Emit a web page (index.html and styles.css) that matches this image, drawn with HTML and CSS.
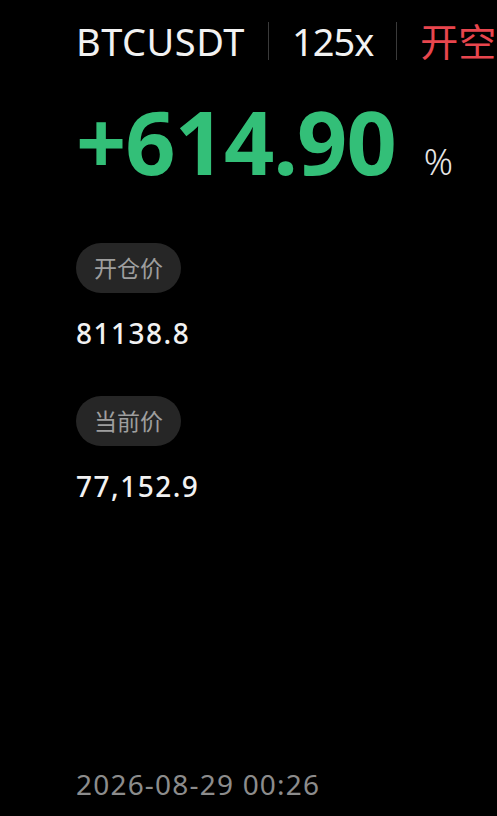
FILE: index.html
```html
<!DOCTYPE html>
<html lang="zh-CN">
<head>
    <meta charset="UTF-8">
    <meta name="viewport" content="width=device-width, initial-scale=1.0">
    <title>BTCUSDT</title>
    <link rel="stylesheet" href="styles.css">
</head>
<body>
    <div class="card">
        <div class="header">
            <span class="symbol">BTCUSDT</span>
            <span class="divider"></span>
            <span class="leverage">125x</span>
            <span class="divider"></span>
            <span class="side">开空</span>
        </div>

        <div class="pnl">
            <span class="pnlValue">+614.90</span>
            <span class="pnlUnit">%</span>
        </div>

        <div class="field">
            <div class="label">开仓价</div>
            <div class="price">81138.8</div>
        </div>

        <div class="field">
            <div class="label">当前价</div>
            <div class="price">77,152.9</div>
        </div>

        <div class="time">2026-08-29 00:26</div>
    </div>
</body>
</html>
```

FILE: styles.css
```css
body {
    margin: 0;
    background-color: #000;
    font-family: "Noto Sans", "Noto Sans CJK SC", sans-serif;
    overflow: hidden;
}

.card {
    height: 816px;
    box-sizing: border-box;
    padding: 17px 0 14px 76px;
    display: flex;
    flex-direction: column;
    align-items: flex-start;
    color: #f2f2f2;
}

.header {
    display: flex;
    align-items: center;
    white-space: nowrap;
    font-size: 38px;
    line-height: 48px;
}

.divider {
    width: 1px;
    height: 38px;
    background-color: #3a3a3a;
    margin: 0 23px;
}

.symbol {
    letter-spacing: 0.5px;
}

.leverage {
    letter-spacing: -1px;
}

.side {
    color: #e8464e;
}

.pnl {
    display: flex;
    align-items: baseline;
    margin-top: 26px;
}

.pnlValue {
    font-size: 88px;
    font-weight: bold;
    line-height: 100px;
    color: #33bf78;
    letter-spacing: -1px;
}

.pnlUnit {
    font-size: 36px;
    font-weight: 300;
    margin-left: 28px;
    color: #e6e6e6;
}

.field {
    display: flex;
    flex-direction: column;
    align-items: flex-start;
    margin-top: 52px;
}

.field + .field {
    margin-top: 45px;
}

.label {
    height: 50px;
    line-height: 50px;
    padding: 0 18px;
    border-radius: 25px;
    background-color: #262626;
    color: #9e9e9e;
    font-size: 23px;
}

.price {
    margin-top: 22px;
    font-size: 28px;
    line-height: 36px;
    font-weight: 500;
    letter-spacing: 1.5px;
}

.time {
    margin-top: auto;
    font-size: 28px;
    line-height: 36px;
    color: #8c8c8c;
    letter-spacing: 1.2px;
}
```
